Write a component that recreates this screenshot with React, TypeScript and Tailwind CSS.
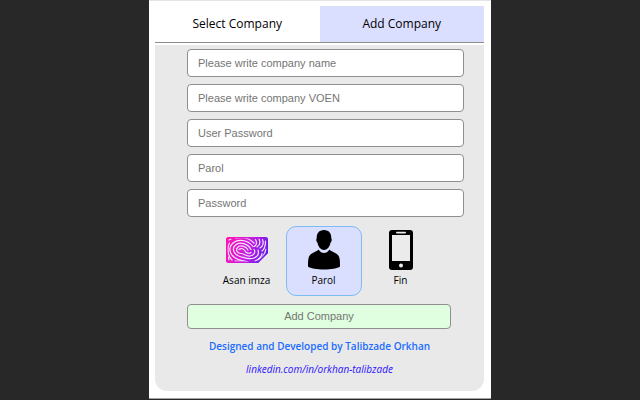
import { useState } from "react";
import type { ReactNode } from "react";
import clsx from "clsx";

const fields = [
  { name: "company", label: "Please write company name", type: "text" },
  { name: "voen", label: "Please write company VOEN", type: "text" },
  { name: "userPassword", label: "User Password", type: "password" },
  { name: "parol", label: "Parol", type: "password" },
  { name: "password", label: "Password", type: "password" },
];

function FingerprintCard() {
  return (
    <svg viewBox="0 0 42 26" className="h-[26px] w-[42px]" fill="none" aria-hidden="true">
      <defs>
        <linearGradient id="imza" x1="0" y1="4" x2="42" y2="20" gradientUnits="userSpaceOnUse">
          <stop offset="0" stopColor="#ff14b0" />
          <stop offset="0.5" stopColor="#cc1ce0" />
          <stop offset="1" stopColor="#5a1cf0" />
        </linearGradient>
        <clipPath id="card">
          <path d="M3 0H39Q42 0 42 3V16L32 26H3Q0 26 0 23V3Q0 0 3 0Z" />
        </clipPath>
      </defs>
      <g clipPath="url(#card)">
        <path d="M0 0H42V26H0Z" fill="url(#imza)" />
        <g stroke="#f6e6fb" strokeWidth="1.2" strokeLinecap="round">
          <path d="M13 12.500C15 10.500 18 12 19 14S23 17 25 15.500" />
          <path d="M22 13C20 9 14 7.500 11.500 10.500S12 16.500 15 16.500S20 19.500 24 19S30 15 28 12.500" />
          <path d="M25 12.500C22 7 14 4 9.500 8S8.500 18 14 19.500S23 23 28 21S33 16 32 13" />
          <path d="M27 9.500C22 3 12 1 6.500 6.500S5 20 12.500 22.500S20 24 23 25.500" />
          <path d="M28 6C23 1 16 0 10 1.500M3.500 6C1 10 1.500 19 6 23" />
          <path d="M28 9.500C31 8.500 31 5 29.500 2.500M31 10C34 8 34.500 5 33 2" />
          <path d="M34 11C37 9 38 6 36.500 2.500M36 14C39 12 39.500 9 39.500 4" />
          <path d="M29 24C34 22 36 18 36 16.500M33 23C37 20 39 17 40 12" />
          <path d="M3 3L5 2M3 23L2.500 20M9 24H16" />
        </g>
      </g>
      <path
        d="M3 .7H39Q41.3 .7 41.3 3V15.7L31.7 25.3H3Q.7 25.3 .7 23V3Q.7 .7 3 .7Z"
        stroke="url(#imza)"
        strokeWidth="1.4"
      />
    </svg>
  );
}

function Person() {
  return (
    <svg viewBox="0 0 32 40" className="h-10 w-8" aria-hidden="true">
      <path d="M16 0C11 0 8.500 3.500 8.700 8.500C7.800 9 8.300 12 9.500 12.800C10.300 17 13 20 16 20S21.700 17 22.500 12.800C23.700 12 24.200 9 23.300 8.500C23.500 3.500 21 0 16 0Z" />
      <path d="M10.500 19.500C12 22 14 23 16 23S20 22 21.500 19.500C23 22 30 22.500 31.300 27.500C32 30 32 33 32 36.500C28 40.500 4 40.500 0 36.500C0 33 0 30 .7 27.500C2 22.500 9 22 10.500 19.500Z" />
    </svg>
  );
}

function Phone() {
  return (
    <svg viewBox="0 0 24 40" className="h-10 w-6" aria-hidden="true">
      <rect width="24" height="40" rx="3" />
      <rect x="3" y="5" width="18" height="26" fill="#ebebeb" />
      <rect x="7" y="1.800" width="10" height="1.600" rx="0.800" fill="#ebebeb" />
      <circle cx="12" cy="35.500" r="2" fill="#ebebeb" />
    </svg>
  );
}

const methods: { id: string; icon: ReactNode }[] = [
  { id: "Asan imza", icon: <FingerprintCard /> },
  { id: "Parol", icon: <Person /> },
  { id: "Fin", icon: <Phone /> },
];

export default function App() {
  const [tab, setTab] = useState("Add Company");
  const [method, setMethod] = useState("Parol");

  return (
    <div className="flex min-h-screen justify-center bg-[#282828] pb-px font-['Open_Sans','Noto_Sans',sans-serif] text-black">
      <main className="flex w-full max-w-[342px] flex-col border-t border-b border-t-neutral-200 border-b-neutral-400 bg-white pt-[5px] pr-[7px] pb-[7px] pl-1.5">
        <nav className="grid grid-cols-2 border-b border-[#8c8c8c]">
          {["Select Company", "Add Company"].map((name) => (
            <button
              key={name}
              type="button"
              onClick={() => setTab(name)}
              className={clsx("h-9 text-xs", tab === name && "bg-[#dbdfff]")}
            >
              {name}
            </button>
          ))}
        </nav>

        <div className="mt-0.5 grow rounded-b-xl bg-[#e9e9e9] pt-1 pr-5 pl-8">
          <form onSubmit={(e) => e.preventDefault()}>
            <div className="flex flex-col gap-[7px]">
              {fields.map((field) => (
                <input
                  key={field.name}
                  name={field.name}
                  type={field.type}
                  placeholder={field.label}
                  aria-label={field.label}
                  className="h-7 w-full rounded border border-[#8f8f8f] bg-white px-2.5 font-['Liberation_Sans',Arial,sans-serif] text-[11px] placeholder:text-[#757575]"
                />
              ))}
            </div>

            <div className="mt-[9px] mr-1 flex justify-center gap-px">
              {methods.map(({ id, icon }) => (
                <button
                  key={id}
                  type="button"
                  aria-pressed={method === id}
                  onClick={() => setMethod(id)}
                  className={clsx(
                    "flex h-[70px] w-[76px] flex-col items-center rounded-[10px] border pt-[3px] text-[10px] leading-4",
                    method === id ? "border-[#7dbcf5] bg-[#dbdfff]" : "border-transparent",
                  )}
                >
                  <span className="flex h-10 items-center">{icon}</span>
                  <span className="mt-0.5">{id}</span>
                </button>
              ))}
            </div>

            <div className="mt-2 mr-[13px]">
              <button
                type="submit"
                className="block h-[25px] w-full rounded border border-[#8f8f8f] bg-[#e0ffe0] font-['Liberation_Sans',Arial,sans-serif] text-[11px] text-[#757575]"
              >
                Add Company
              </button>
            </div>
          </form>

          <footer className="mt-[9px] mr-3 text-center text-[10px] leading-4">
            <p className="font-semibold text-[#1b6cff]">Designed and Developed by Talibzade Orkhan</p>
            <a
              href="https://linkedin.com/in/orkhan-talibzade"
              className="mx-auto mt-[7px] block w-fit text-[#2a12ff] italic"
            >
              linkedin.com/in/orkhan-talibzade
            </a>
          </footer>
        </div>
      </main>
    </div>
  );
}
